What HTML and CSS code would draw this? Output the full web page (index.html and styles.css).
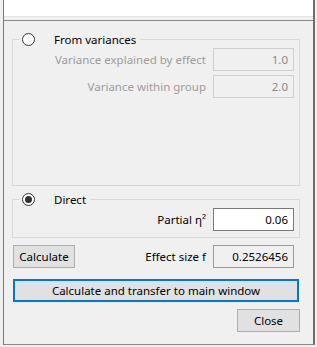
FILE: index.html
```html
<!DOCTYPE html>
<html>
<head>
<meta charset="utf-8">
<link rel="stylesheet" href="styles.css">
</head>
<body>
<div class="win">
  <div class="topbox"></div>
  <div class="main">
    <fieldset class="group g1">
      <legend class="legend"><span class="radio"></span><span class="ltext">From variances</span></legend>
      <div class="rows">
        <div class="row"><span class="lbl dis">Variance explained by effect</span><span class="field disf">1.0</span></div>
        <div class="row"><span class="lbl dis">Variance within group</span><span class="field disf">2.0</span></div>
      </div>
    </fieldset>
    <fieldset class="group g2">
      <legend class="legend"><span class="radio on"></span><span class="ltext">Direct</span></legend>
      <div class="rows">
        <div class="row"><span class="lbl">Partial η²</span><span class="field edit">0.06</span></div>
      </div>
    </fieldset>
    <div class="calcrow">
      <span class="btn calc">Calculate</span>
      <span class="spacer"></span>
      <span class="lbl">Effect size f</span><span class="field ro">0.2526456</span>
    </div>
    <div class="btn transfer">Calculate and transfer to main window</div>
    <div class="closerow"><span class="btn close">Close</span></div>
  </div>
</div>
</body>
</html>
```
FILE: styles.css
```css
html, body { margin: 0; padding: 0; }
body {
  background: #f0f0f0;
  font-family: "Noto Sans", "DejaVu Sans", sans-serif;
  font-size: 11.5px;
  color: #000;
  width: 317px;
  height: 347px;
  overflow: hidden;
}
.win {
  margin-left: 3px;
  width: 312px;
  height: 345px;
  border-left: 1px solid #7a7a7a;
  border-right: 2px solid #6e6e6e;
  border-bottom: 1px solid #8a8a8a;
  box-sizing: border-box;
  display: flex;
  flex-direction: column;
}
.topbox {
  height: 16px;
  background: #fff;
  border-bottom: 1px solid #e3e3e3;
  flex: none;
}
.main {
  margin-top: 3px;
  border-top: 1px solid #8a8a8a;
  flex: 1;
  padding: 0 13px 0 8px;
  display: flex;
  flex-direction: column;
}
.group {
  margin: 0;
  padding: 0 5px 0 0;
  border: 1px solid #d9d9d9;
  min-width: 0;
}
.g1 { margin-top: 10px; height: 155px; box-sizing: border-box; }
.g2 { margin-top: 5px; height: 47px; box-sizing: border-box; }
.legend {
  margin-left: 7px;
  padding: 0 4px 0 2px;
  height: 16px;
  display: flex;
  align-items: center;
}
.g1 .legend { margin-top: -1px; }
.radio {
  width: 13px;
  height: 13px;
  box-sizing: border-box;
  border: 1px solid #333;
  border-radius: 50%;
  background: #fff;
  display: flex;
  align-items: center;
  justify-content: center;
}
.radio.on::after {
  content: "";
  width: 7px;
  height: 7px;
  border-radius: 50%;
  background: #333;
}
.ltext { margin-left: 19px; }
.rows {
  display: flex;
  flex-direction: column;
  gap: 4px;
  padding-top: 1px;
}
.row, .calcrow {
  display: flex;
  align-items: center;
  justify-content: flex-end;
}
.lbl { margin-right: 7px; }
.dis { color: #9c9c9c; }
.field {
  width: 81px;
  height: 23px;
  box-sizing: border-box;
  padding: 0 5px;
  display: flex;
  align-items: center;
  justify-content: flex-end;
  border: 1px solid #cfcfcf;
}
.disf { color: #8a8a8a; background: #f0f0f0; }
.edit { background: #fff; border-color: #7a7a7a; }
.ro { background: #f0f0f0; border-color: #9a9a9a; }
.calcrow { margin-top: 7px; padding-right: 6px; margin-left: 1px; }
.spacer { flex: 1; }
.btn {
  height: 23px;
  box-sizing: border-box;
  background: #e1e1e1;
  border: 1px solid #adadad;
  display: flex;
  align-items: center;
  justify-content: center;
}
.calc { width: 62px; }
.transfer {
  margin: 11px 0 0 1px;
  width: 286px;
  border: 2px solid #0078d7;
}
.closerow {
  display: flex;
  justify-content: flex-end;
  margin-top: 7px;
}
.close { width: 63px; }
```
